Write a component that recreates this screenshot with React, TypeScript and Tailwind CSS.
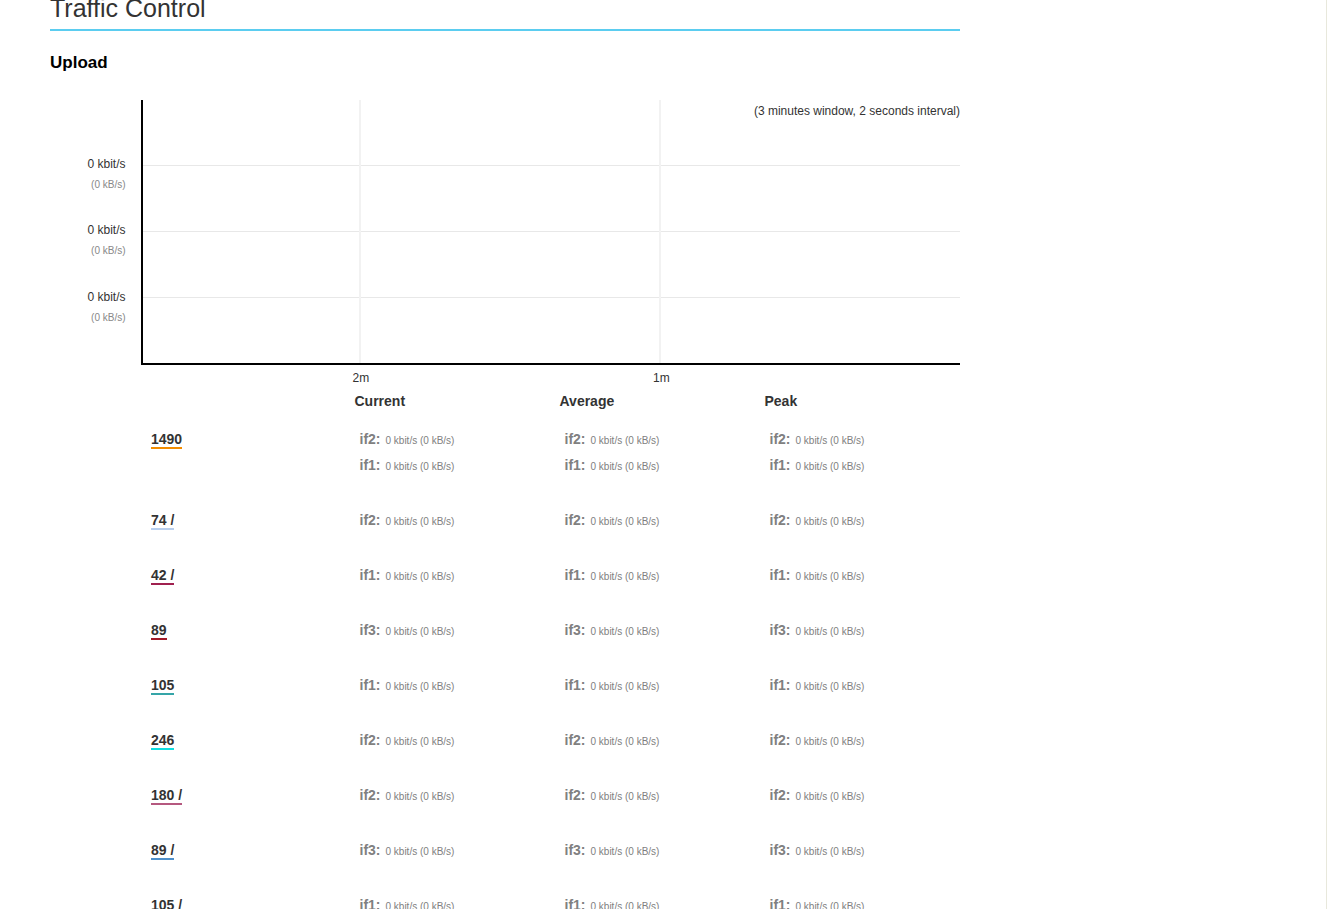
const SANS = "font-['Liberation_Sans',Arial,sans-serif]";

const ROWS = [
  { label: '1490', color: 'border-[#f28c00]', ifs: ['if2', 'if1'] },
  { label: '74 /', color: 'border-[#b8cfee]', ifs: ['if2'] },
  { label: '42 /', color: 'border-[#a0204f]', ifs: ['if1'] },
  { label: '89', color: 'border-[#a01828]', ifs: ['if3'] },
  { label: '105', color: 'border-[#35a5a8]', ifs: ['if1'] },
  { label: '246', color: 'border-[#10dde0]', ifs: ['if2'] },
  { label: '180 /', color: 'border-[#b5587f]', ifs: ['if2'] },
  { label: '89 /', color: 'border-[#4d8fcb]', ifs: ['if3'] },
  { label: '105 /', color: 'border-[#35a5a8]', ifs: ['if1'] },
];

function Chart() {
  const yLabels = [165, 231, 297];
  return (
    <div className="relative h-[291px] w-[910px]">
      <svg className="absolute inset-0" width="910" height="291">
        {yLabels.map((y) => (
          <line key={y} x1="92" x2="910" y1={y - 100 + 0.5} y2={y - 100 + 0.5} stroke="#e8e8e8" />
        ))}
        <line x1="310" x2="310" y1="0" y2="263" stroke="#f2f2f2" strokeWidth="2" />
        <line x1="610" x2="610" y1="0" y2="263" stroke="#f2f2f2" strokeWidth="2" />
        <line x1="92" x2="92" y1="0" y2="265" stroke="#000" strokeWidth="2" />
        <line x1="91" x2="910" y1="264" y2="264" stroke="#000" strokeWidth="2" />
      </svg>
      <div className="absolute right-0 top-[4px] text-[12px] leading-[14px] text-[#333]">(3 minutes window, 2 seconds interval)</div>
      {yLabels.map((y, i) => (
        <div key={y} className="absolute right-[834.5px] text-right" style={{ top: y - 108 + (i === 2 ? 1 : 0) }}>
          <div className="text-[12px] leading-[14px] text-[#333]">0 kbit/s</div>
          <div className="mt-[7px] text-[10px] leading-[14px] text-[#888]">(0 kB/s)</div>
        </div>
      ))}
      <div className="absolute left-[302.5px] top-[271px] text-[12px] leading-[14px] text-[#333]">2m</div>
      <div className="absolute left-[603px] top-[271px] text-[12px] leading-[14px] text-[#333]">1m</div>
    </div>
  );
}

function Stat({ ifs }: { ifs: string[] }) {
  return (
    <div className="-mt-px w-[205px] shrink-0 pl-[9.5px]">
      {ifs.map((name) => (
        <div key={name} className="flex h-[26px] items-baseline whitespace-nowrap">
          <span className="w-[26px] shrink-0 text-[14px] font-bold leading-[26px] text-[#808080]">{name}:</span>
          <span className="text-[10px] leading-[26px] text-[#808080]">0 kbit/s (0 kB/s)</span>
        </div>
      ))}
    </div>
  );
}

export default function App() {
  return (
    <div className={`${SANS} h-[909px] w-[1327px] overflow-hidden border-r border-[#e8e8dc] bg-white`}>
      <div className="ml-[50px] w-[910px]">
        <h2 className="-mt-[7px] h-[38px] border-b-2 border-[#5bcdf0] text-[25px] font-normal leading-[30px] text-[#333]">Traffic Control</h2>
        <h3 className="mt-[22px] h-[47px] text-[17px] font-bold leading-[20px] text-black">Upload</h3>
        <Chart />
        <div className="ml-[101px] flex flex-col">
          <div className="-mt-[3px] flex h-[26px] items-center">
            <div className="w-[203.5px] shrink-0" />
            <div className="flex text-[14px] font-bold text-[#333]">
              <div className="w-[205px] shrink-0">Current</div>
              <div className="w-[205px] shrink-0">Average</div>
              <div className="w-[205px] shrink-0">Peak</div>
            </div>
          </div>
          {ROWS.map((row, i) => (
            <div key={i} className={`flex ${i === 0 ? 'mt-[13px] h-[81px]' : 'h-[55px]'}`}>
              <div className="w-[199px] shrink-0">
                <span className={`inline-block h-[20px] border-b-2 text-[14px] font-bold leading-[20px] text-[#333] ${row.color}`}>{row.label}</span>
              </div>
              <Stat ifs={row.ifs} />
              <Stat ifs={row.ifs} />
              <Stat ifs={row.ifs} />
            </div>
          ))}
        </div>
      </div>
    </div>
  );
}
